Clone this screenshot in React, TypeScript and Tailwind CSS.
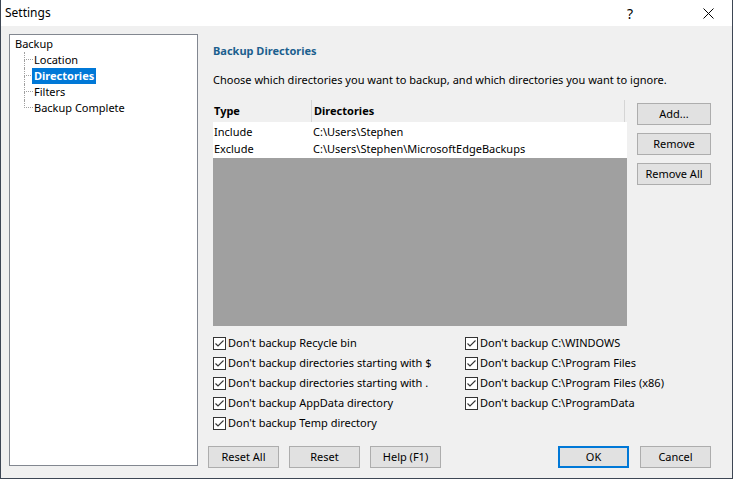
import React from 'react'

const LEFT_OPTIONS = [
  "Don't backup Recycle bin",
  "Don't backup directories starting with $",
  "Don't backup directories starting with .",
  "Don't backup AppData directory",
  "Don't backup Temp directory",
]

const RIGHT_OPTIONS = [
  "Don't backup C:\\WINDOWS",
  "Don't backup C:\\Program Files",
  "Don't backup C:\\Program Files (x86)",
  "Don't backup C:\\ProgramData",
]

const TREE = ['Location', 'Directories', 'Filters', 'Backup Complete']

function CheckBox({ label }: { label: string }) {
  return (
    <div className="flex items-center h-[20px] gap-[2px]">
      <svg width="13" height="13" viewBox="0 0 13 13" className="shrink-0">
        <rect x="0.5" y="0.5" width="12" height="12" fill="#fff" stroke="#333" />
        <path d="M2.5 6.5 L5 9 L10.5 3.5" fill="none" stroke="#333" strokeWidth="1.1" />
      </svg>
      <span className="text-[11px] text-black whitespace-nowrap">{label}</span>
    </div>
  )
}

function Btn({ children, w = 'w-[74px]', primary = false }: { children: React.ReactNode; w?: string; primary?: boolean }) {
  return (
    <button
      className={`${w} h-[22px] text-[11px] text-black bg-[#e1e1e1] ${primary ? 'border-2 border-[#0078d7]' : 'border border-[#adadad]'} flex items-center justify-center`}
    >
      {children}
    </button>
  )
}

export default function App() {
  return (
    <div
      className="w-[733px] h-[479px] bg-[#f0f0f0] border border-[#3d4654] border-t-0 flex flex-col overflow-hidden"
      style={{ fontFamily: '"Noto Sans", "Open Sans", "Liberation Sans", sans-serif' }}
    >
      {/* title bar */}
      <div className="h-[26px] bg-white flex items-center shrink-0">
        <span className="pl-[4px] text-[12px] text-black flex-1">Settings</span>
        <span className="w-[20px] text-center text-[14px] text-black mr-[63px]">?</span>
        <svg width="11" height="11" viewBox="0 0 11 11" className="mr-[18px]">
          <path d="M0.5 0.5 L10.5 10.5 M10.5 0.5 L0.5 10.5" stroke="#000" strokeWidth="1" />
        </svg>
      </div>

      <div className="flex flex-1 pt-[8px] pl-[8px]">
        {/* tree */}
        <div className="w-[189px] h-[432px] bg-white border border-[#828790] pt-[1px] pl-[5px] text-[11px] text-black leading-[16px]">
          <div className="h-[16px]">Backup</div>
          <div className="pl-[9px]">
            {TREE.map((t, i) => {
              const last = i === TREE.length - 1
              return (
                <div key={t} className="flex h-[16px]">
                  <div className="w-[9px] flex flex-col shrink-0">
                    <div className="h-[8px] border-l border-b border-dotted border-[#a0a0a0]" />
                    <div className={`h-[8px] ${last ? '' : 'border-l border-dotted border-[#a0a0a0]'}`} />
                  </div>
                  {t === 'Directories' ? (
                    <span className="bg-[#0078d7] text-white font-bold px-[2px] ml-[-1px]">{t}</span>
                  ) : (
                    <span className="pl-[1px]">{t}</span>
                  )}
                </div>
              )
            })}
          </div>
        </div>

        {/* content */}
        <div className="flex-1 pl-[15px] flex flex-col">
          <div className="pt-[9px] text-[11px] font-bold text-[#1c5f8e] leading-[16px]">Backup Directories</div>
          <div className="pt-[13px] text-[11px] text-black leading-[16px] whitespace-nowrap">
            Choose which directories you want to backup, and which directories you want to ignore.
          </div>

          <div className="flex mt-[12px] gap-[10px]">
            {/* list */}
            <div className="w-[414px] h-[226px] flex flex-col">
              <div className="h-[22px] flex items-stretch text-[11px] font-bold text-black">
                <div className="w-[99px] flex items-center pl-[1px] border-r border-[#d5d5d5]">Type</div>
                <div className="flex-1 flex items-center pl-[2px] border-r border-[#d5d5d5] mr-[2px]">Directories</div>
              </div>
              <div className="bg-white text-[11px] text-black leading-[17px] pt-[1px] pb-[1px]">
                <div className="flex">
                  <span className="w-[100px] pl-[1px]">Include</span>
                  <span>C:\Users\Stephen</span>
                </div>
                <div className="flex">
                  <span className="w-[100px] pl-[1px]">Exclude</span>
                  <span>C:\Users\Stephen\MicrosoftEdgeBackups</span>
                </div>
              </div>
              <div className="flex-1 bg-[#a0a0a0]" />
            </div>

            {/* side buttons */}
            <div className="flex flex-col gap-[8px] pt-[3px]">
              <Btn>Add...</Btn>
              <Btn>Remove</Btn>
              <Btn>Remove All</Btn>
            </div>
          </div>

          {/* options */}
          <div className="flex mt-[7px]">
            <div className="w-[252px] flex flex-col">
              {LEFT_OPTIONS.map((o) => (
                <CheckBox key={o} label={o} />
              ))}
            </div>
            <div className="flex flex-col">
              {RIGHT_OPTIONS.map((o) => (
                <CheckBox key={o} label={o} />
              ))}
            </div>
          </div>

          {/* bottom buttons */}
          <div className="flex mt-[13px] ml-[-5px] pr-[21px]">
            <div className="flex gap-[10px]">
              <Btn w="w-[71px]">Reset All</Btn>
              <Btn w="w-[71px]">Reset</Btn>
              <Btn w="w-[71px]">Help (F1)</Btn>
            </div>
            <div className="flex-1" />
            <div className="flex gap-[11px]">
              <Btn w="w-[71px]" primary>OK</Btn>
              <Btn w="w-[71px]">Cancel</Btn>
            </div>
          </div>
        </div>
      </div>
    </div>
  )
}
